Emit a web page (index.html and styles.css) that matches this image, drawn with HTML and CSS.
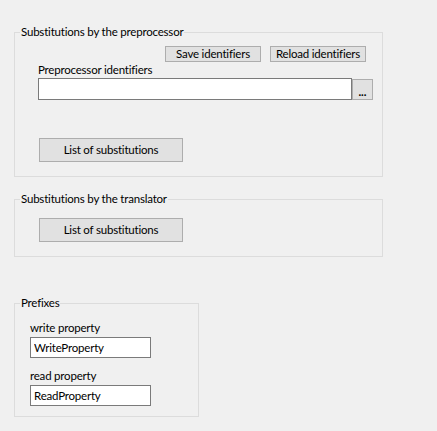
FILE: index.html
```html
<!DOCTYPE html>
<html>
<head>
<meta charset="utf-8">
<link rel="stylesheet" href="styles.css">
</head>
<body>
<div class="page">
  <fieldset class="group group-pre">
    <legend>Substitutions by the preprocessor</legend>
    <div class="btn-row">
      <button class="btn btn-small">Save identifiers</button>
      <button class="btn btn-small">Reload identifiers</button>
    </div>
    <div class="field-pre">
      <label class="label">Preprocessor identifiers</label>
      <div class="input-row">
        <input class="input input-wide" type="text" value="">
        <button class="btn btn-dots">...</button>
      </div>
    </div>
    <button class="btn btn-list btn-list-pre">List of substitutions</button>
  </fieldset>

  <fieldset class="group group-trans">
    <legend>Substitutions by the translator</legend>
    <button class="btn btn-list btn-list-trans">List of substitutions</button>
  </fieldset>

  <fieldset class="group group-prefix">
    <legend>Prefixes</legend>
    <label class="label label-prefix">write property</label>
    <input class="input input-prefix" type="text" value="WriteProperty">
    <label class="label label-prefix label-read">read property</label>
    <input class="input input-prefix" type="text" value="ReadProperty">
  </fieldset>
</div>
</body>
</html>
```

FILE: styles.css
```css
html, body {
  margin: 0;
  padding: 0;
  background: #f0f0f0;
}
body {
  font-family: Lato, "Noto Sans", sans-serif;
  font-size: 11.5px;
  letter-spacing: -0.2px;
  color: #000;
}
.page {
  padding-top: 24px;
  display: flex;
  flex-direction: column;
  align-items: flex-start;
}
.group {
  margin: 0 0 0 14px;
  border: 1px solid #dcdcdc;
  padding: 0;
  box-sizing: border-box;
  display: flex;
  flex-direction: column;
  align-items: flex-start;
}
.group legend {
  margin-left: 5px;
  padding: 0 1px;
  line-height: 16px;
  height: 16px;
  white-space: nowrap;
}
.group-pre {
  width: 369px;
  height: 153px;
}
.group-trans {
  width: 369px;
  height: 66px;
  margin-top: 14px;
}
.group-prefix {
  width: 185px;
  height: 122px;
  margin-top: 38px;
}
.btn {
  font-family: inherit;
  font-size: 11.5px;
  letter-spacing: -0.2px;
  color: #000;
  background: #e1e1e1;
  border: 1px solid #adadad;
  border-radius: 0;
  margin: 0;
  padding: 0;
  box-sizing: border-box;
  line-height: 1;
  white-space: nowrap;
}
.btn-row {
  align-self: stretch;
  display: flex;
  justify-content: flex-end;
  gap: 9px;
  padding-right: 16px;
  margin-top: 6px;
}
.btn-small {
  width: 96px;
  height: 16px;
}
.field-pre {
  margin-left: 23px;
  margin-top: 0;
  display: flex;
  flex-direction: column;
}
.label {
  display: block;
  line-height: 16px;
  height: 16px;
}
.input-row {
  display: flex;
  align-items: flex-start;
}
.input {
  font-family: inherit;
  font-size: 11.5px;
  letter-spacing: -0.2px;
  color: #000;
  background: #fff;
  border: 1px solid #7a7a7a;
  border-radius: 0;
  margin: 0;
  box-sizing: border-box;
  outline: none;
}
.input-wide {
  width: 314px;
  height: 22px;
  padding: 0 4px;
}
.btn-dots {
  width: 21px;
  height: 21px;
  margin-top: 1px;
  font-weight: bold;
  letter-spacing: 0;
  padding-top: 4px;
}
.btn-list {
  width: 144px;
  height: 24px;
  margin-left: 24px;
}
.btn-list-pre {
  margin-top: 38px;
}
.btn-list-trans {
  margin-top: 11px;
}
.group-prefix .label-prefix {
  margin-left: 15px;
  margin-top: 9px;
}
.group-prefix .label-read {
  margin-top: 10px;
}
.input-prefix {
  width: 121px;
  height: 21px;
  margin-left: 15px;
  margin-top: 1px;
  padding: 0 3px;
}
```
